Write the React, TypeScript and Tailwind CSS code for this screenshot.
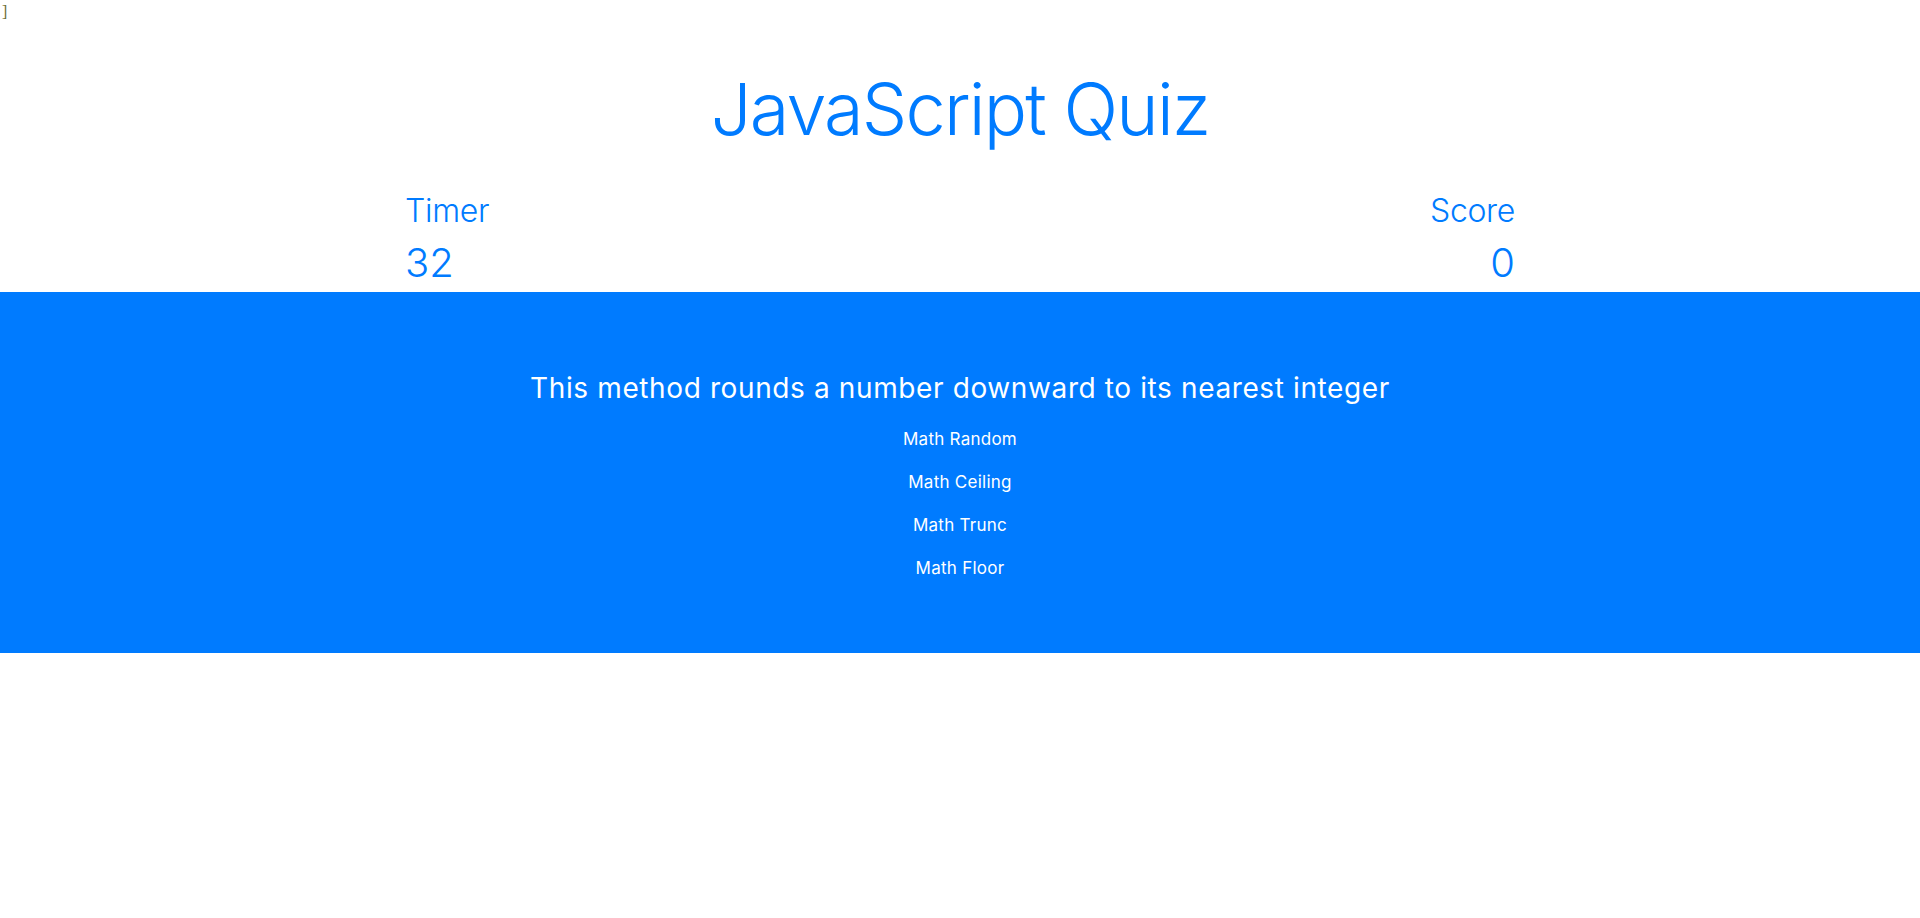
const answers = ["Math Random", "Math Ceiling", "Math Trunc", "Math Floor"];

export default function App() {
  return (
    <div className="min-h-[918px] bg-white font-['Inter','Noto_Sans',sans-serif]">
      {/* stray bracket left in the page */}
      <div className="h-6 pl-[2px] font-['Liberation_Serif',serif] text-base leading-6 text-[#6b6b2f]">]</div>

      <h1 className="mt-[42px] text-center text-[72px] font-light leading-[1.2] tracking-[-0.025em] text-[#007bff]">
        JavaScript Quiz
      </h1>

      <div className="mx-auto mt-[40px] flex max-w-[1140px] justify-between px-[15px] text-[#007bff]">
        <div>
          <div className="mb-2 text-[32px] font-light leading-[1.2] tracking-[-0.01em]">Timer</div>
          <div className="mb-[5px] text-[40px] font-light leading-[1.2]">32</div>
        </div>
        <div className="text-right">
          <div className="mb-2 text-[32px] font-light leading-[1.2] tracking-[-0.01em]">Score</div>
          <div className="mb-[5px] text-[40px] font-light leading-[1.2]">0</div>
        </div>
      </div>

      <section className="flex h-[361px] flex-col items-center bg-[#007bff] pt-[80px] text-white">
        <h4 className="text-[28px] leading-[1.2] tracking-[0.022em]">
          This method rounds a number downward to its nearest integer
        </h4>
        <div className="mt-[12px] flex flex-col items-center">
          {answers.map((a) => (
            <button
              key={a}
              className="h-[43px] px-3 text-[17px] leading-6 font-normal tracking-[0.015em] text-white"
            >
              {a}
            </button>
          ))}
        </div>
      </section>
    </div>
  );
}
